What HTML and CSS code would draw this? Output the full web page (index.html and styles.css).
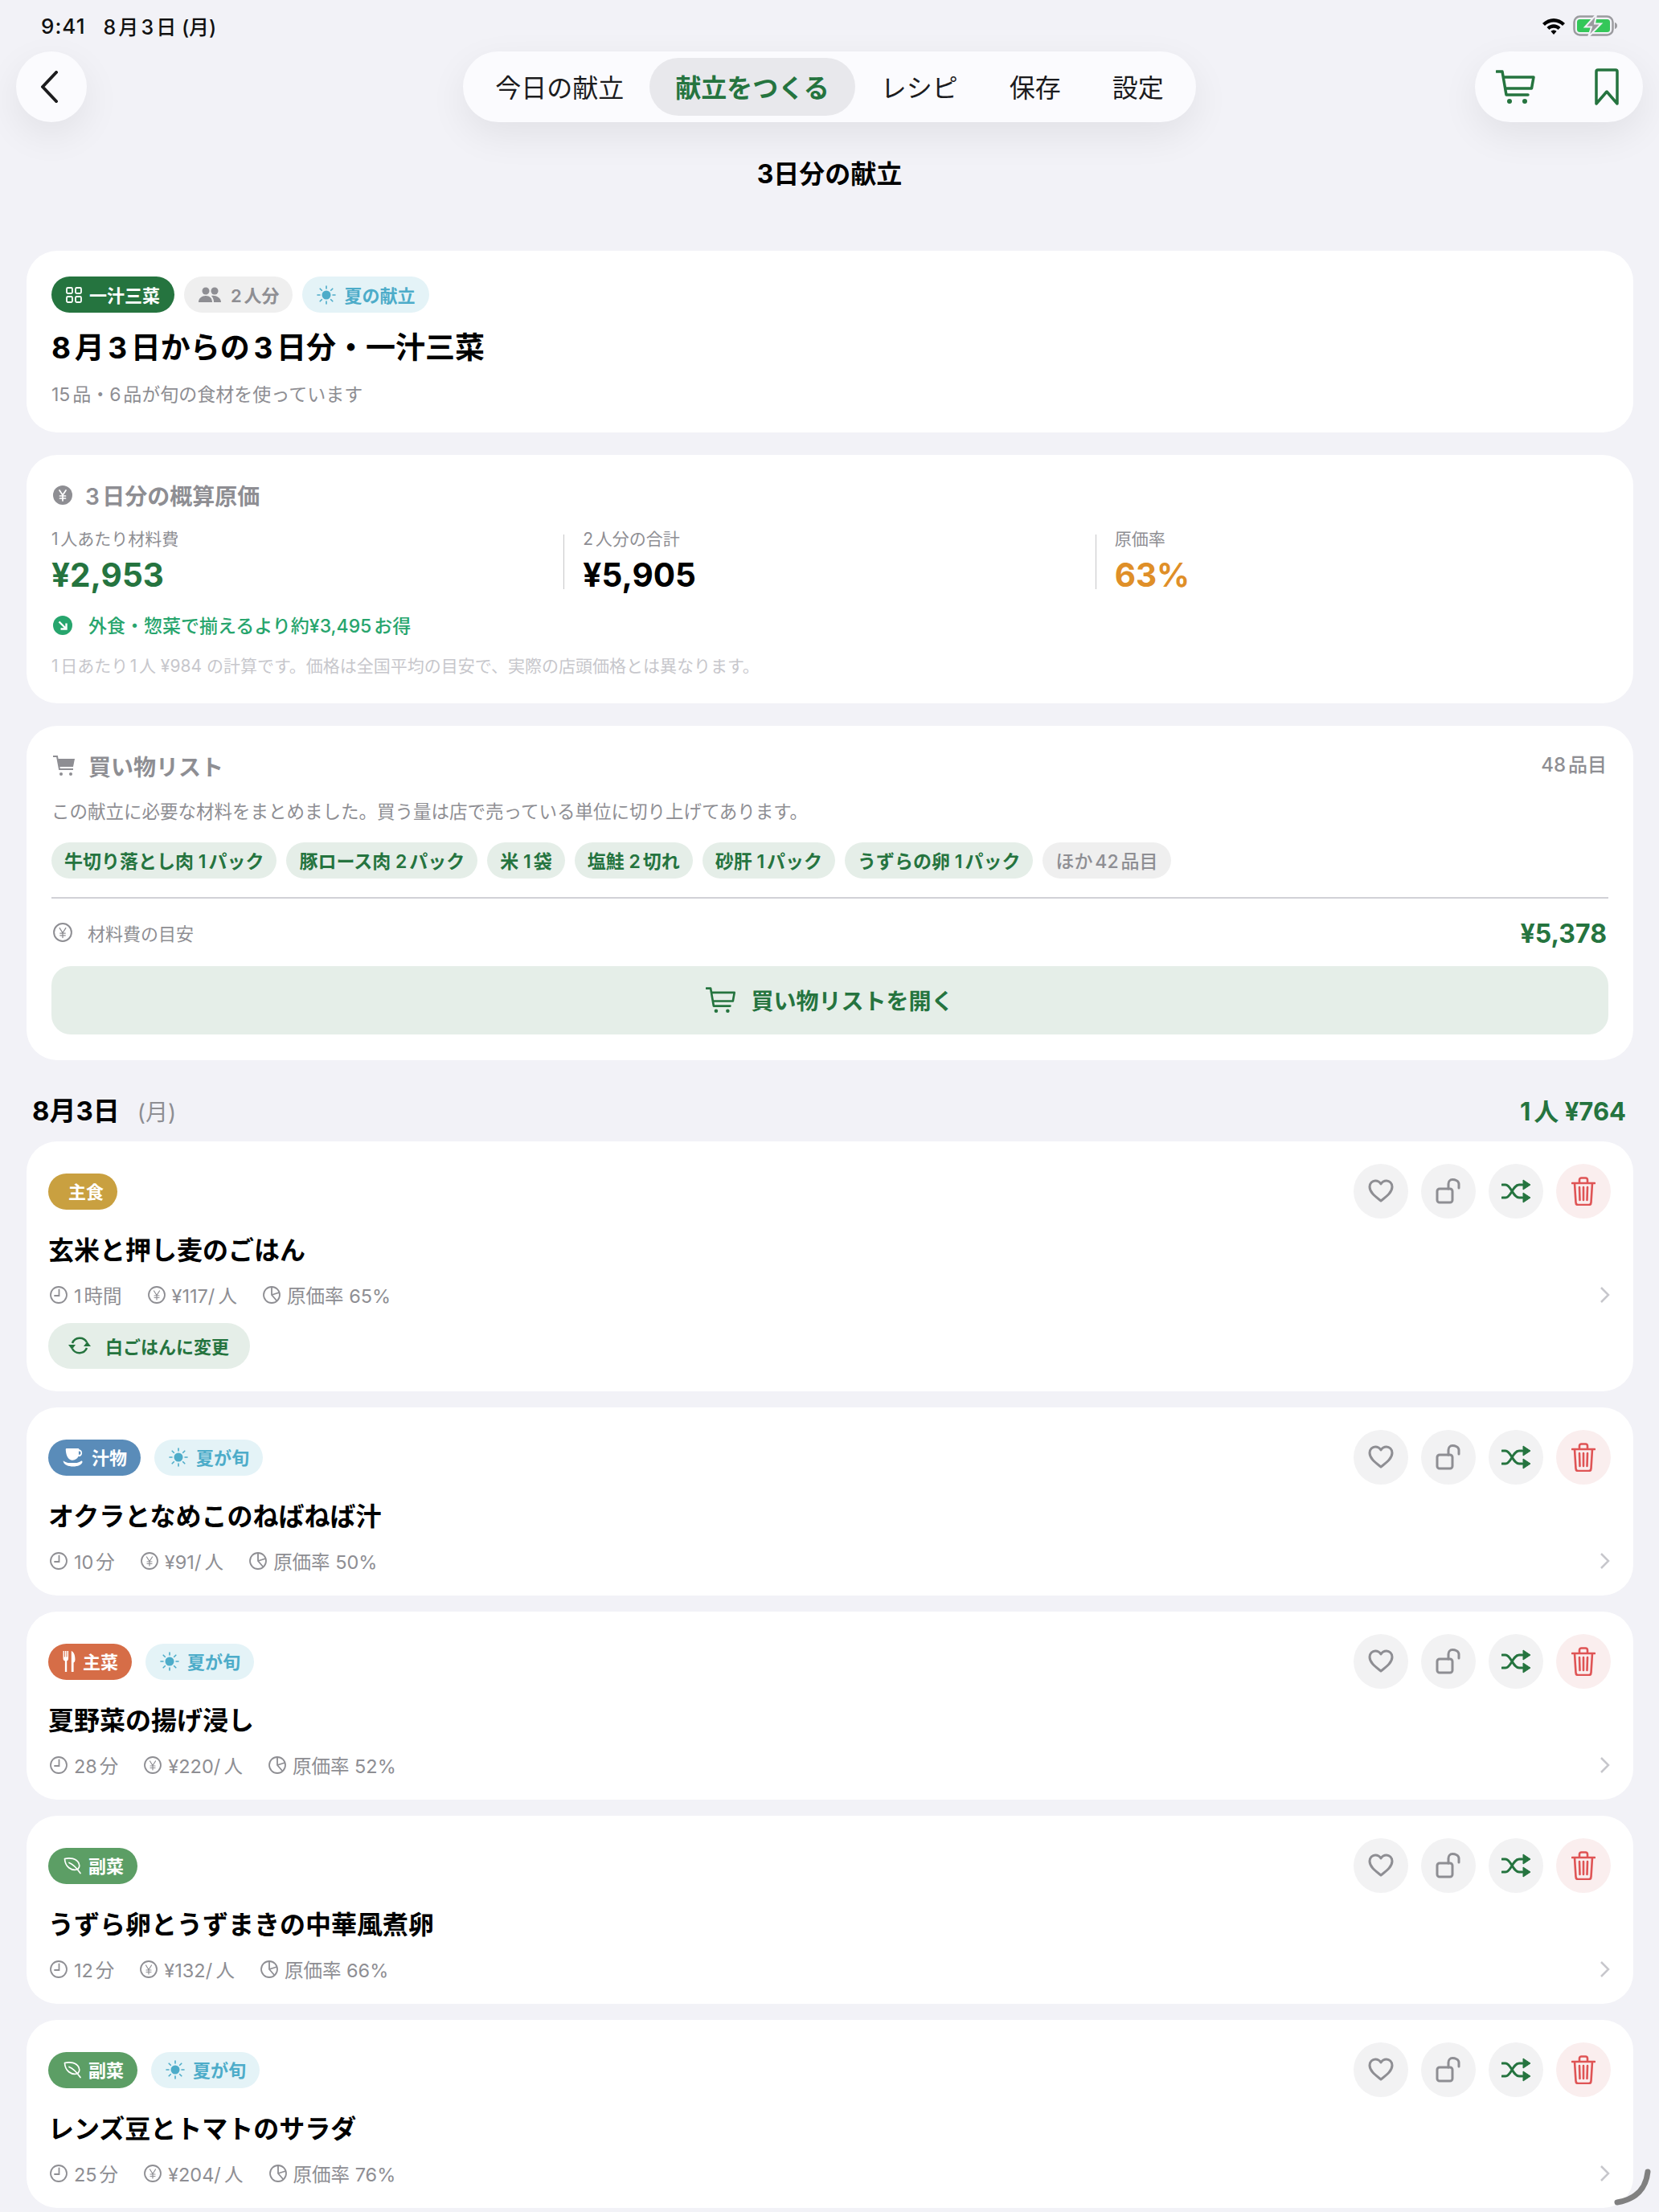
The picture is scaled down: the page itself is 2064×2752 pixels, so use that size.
FILE: index.html
```html
<!DOCTYPE html>
<html lang="ja">
<head>
    <meta charset="UTF-8">
    <title>3日分の献立</title>
    <link rel="stylesheet" href="styles.css">
</head>
<body>
    <svg class="sprite" width="0" height="0">
        <symbol id="i-cart" viewBox="0 0 50 44">
            <path d="M1 3h7l5 29h27M10 10h37l-2.500 14H12.500" fill="none" stroke="currentColor" stroke-width="3.500" stroke-linecap="round" stroke-linejoin="round"/>
            <circle cx="17" cy="40" r="3" fill="currentColor"/><circle cx="36" cy="40" r="3" fill="currentColor"/>
        </symbol>
        <symbol id="i-clock" viewBox="0 0 22 22">
            <circle cx="11" cy="11" r="10" fill="none" stroke="currentColor" stroke-width="1.800"/>
            <path d="M11.500 4.500V12H6" fill="none" stroke="currentColor" stroke-width="1.800" stroke-linecap="round"/>
        </symbol>
        <symbol id="i-yen" viewBox="0 0 22 22">
            <circle cx="11" cy="11" r="10" fill="none" stroke="currentColor" stroke-width="1.800"/>
            <path d="M7.500 6l3.500 5.500L14.500 6M11 11.500V17M8 12h6M8 14.500h6" fill="none" stroke="currentColor" stroke-width="1.200" stroke-linecap="round"/>
        </symbol>
        <symbol id="i-ratio" viewBox="0 0 22 22">
            <circle cx="11" cy="11" r="10" fill="none" stroke="currentColor" stroke-width="1.800"/>
            <path d="M11 1v10l6.500 7.500M11 11l9.500-3" fill="none" stroke="currentColor" stroke-width="1.800"/>
        </symbol>
        <symbol id="i-sun" viewBox="0 0 24 24">
            <circle cx="12" cy="12" r="5.500" fill="currentColor"/>
            <path d="M12 1v3M12 20v3M1 12h3M20 12h3M4.200 4.200l2.100 2.100M17.700 17.700l2.100 2.100M4.200 19.800l2.100-2.100M17.700 6.300l2.100-2.100" stroke="currentColor" stroke-width="1.600" stroke-linecap="round"/>
        </symbol>
        <symbol id="i-leaf" viewBox="0 0 24 24">
            <path d="M2.500 3.500C9 2 17 3 20 9c1.500 3.500.500 7-2.500 8C11 18.500 3 14 2.500 3.500zM8 8.500c4 1.500 9 6 14 13" fill="none" stroke="currentColor" stroke-width="1.700" stroke-linecap="round" stroke-linejoin="round"/>
        </symbol>
        <symbol id="i-cup" viewBox="0 0 28 26">
            <path d="M5 1h15c1.500 0 2 .500 2 1.500a5 5 0 0 1 1 9.500h-2c-1.500 3-4 5-8 5-5 0-8.500-5-9-14C4 2 4 1 5 1zM21.500 5v4.500h1a2.300 2.300 0 0 0 0-4.500z" fill="currentColor" fill-rule="evenodd"/>
            <path d="M1 18c2.500 1.500 3.500 2 6 2.500h12c2.500-.500 3.500-1 6-2.500 1 0 1.500.500 1.500 1.500-1 3.500-6 6-12.500 6S2 23 1 19.500C.500 18.500.500 18 1 18z" fill="currentColor"/>
        </symbol>
        <symbol id="i-fork" viewBox="0 0 16 30">
            <path d="M0 1h1.500v8h1V1h1.800v8h1V1H7v10c0 2-1 3-2 3.500V29H2.500V14.500C1 14 0 13 0 11zM11 1c3 1 5 5 5 11 0 3-.800 4-2 4.500V29h-3z" fill="currentColor"/>
        </symbol>
        <symbol id="i-heart" viewBox="0 0 32 30">
            <path d="M16 27C9 21.500 2 16.500 2 9.500 2 5 5.500 2 9 2c3 0 5.500 1.500 7 4 1.500-2.500 4-4 7-4 3.500 0 7 3 7 7.500 0 7-7 12-14 17.500z" fill="none" stroke="currentColor" stroke-width="3" stroke-linejoin="round"/>
        </symbol>
        <symbol id="i-unlock" viewBox="0 0 32 32">
            <rect x="2" y="13" width="19" height="17" rx="3" fill="none" stroke="currentColor" stroke-width="3"/>
            <path d="M17 13V7c0-3 2-5.500 5-5.500s8 1.500 8 5.500v5" transform="translate(-1 0)" fill="none" stroke="currentColor" stroke-width="3" stroke-linecap="round"/>
        </symbol>
        <symbol id="i-shuffle" viewBox="0 0 36 30">
            <path d="M1 7h4c7 0 9 16 17 16h4M1 23h4c7 0 9-16 17-16h4" fill="none" stroke="currentColor" stroke-width="3" stroke-linecap="round"/>
            <path d="M27 1l9 6-9 6zM27 17l9 6-9 6z" fill="currentColor" stroke="currentColor" stroke-linejoin="round"/>
        </symbol>
        <symbol id="i-trash" viewBox="0 0 30 36">
            <path d="M1 8h28M10 8V4c0-1.500 1-2.500 2.500-2.500h5C19 1.500 20 2.500 20 4v4M4 8l1.500 24c0 2 1 3 3 3h13c2 0 3-1 3-3L26 8M10 13l.500 16M15 13v16M20 13l-.500 16" fill="none" stroke="currentColor" stroke-width="2.600" stroke-linecap="round" stroke-linejoin="round"/>
        </symbol>
    </svg>

    <div class="status-bar">
        <div class="status-left">
            <span class="status-time">9:41</span>
            <span>8月3日 (月)</span>
        </div>
        <div class="status-right">
            <svg width="30" height="22" viewBox="0 0 30 22">
                <path d="M1 8c8-8 20-8 28 0l-3 3c-6-6-16-6-22 0zM6.500 13c5-5 12-5 17 0l-3 3c-3-3-8-3-11 0zM11.500 18c2-2 5-2 7 0L15 22z" fill="#000"/>
            </svg>
            <svg width="56" height="28" viewBox="0 0 56 28">
                <rect x="1.500" y="2.500" width="48" height="23" rx="7" fill="none" stroke="#9b9b9f" stroke-width="2.500"/>
                <path d="M52 10c2 .5 3 2 3 4s-1 3.500-3 4z" fill="#9b9b9f"/>
                <rect x="5" y="6" width="41" height="16" rx="3.500" fill="#34c759"/>
                <path d="M29 0L15 15.500h8L19 28 35 11.500h-8z" fill="#9a9a9e" stroke="#f2f2f7" stroke-width="2"/>
            </svg>
        </div>
    </div>

    <header class="nav">
        <button class="back-btn">
            <svg width="24" height="40" viewBox="0 0 24 40"><path d="M20 2L3 20l17 18" fill="none" stroke="#1c1c1e" stroke-width="4" stroke-linecap="round" stroke-linejoin="round"/></svg>
        </button>
        <nav class="tabs">
            <div class="tab">今日の献立</div>
            <div class="tab active">献立をつくる</div>
            <div class="tab">レシピ</div>
            <div class="tab">保存</div>
            <div class="tab">設定</div>
        </nav>
        <div class="nav-actions">
            <svg class="green" width="50" height="44"><use href="#i-cart"/></svg>
            <svg class="green" width="30" height="46" viewBox="0 0 30 46"><path d="M2 44V4c0-1.500 1-2 2-2h22c1 0 2 .5 2 2v40L15 29z" fill="none" stroke="currentColor" stroke-width="3.500" stroke-linejoin="round"/></svg>
        </div>
    </header>

    <h1 class="page-title">3日分の献立</h1>

    <main>
        <div class="summary-list">
            <section class="card">
                <div class="chips">
                    <span class="chip chip-green">
                        <svg width="20" height="22" viewBox="0 0 20 22"><g fill="none" stroke="currentColor" stroke-width="1.800"><rect x="1" y="2" width="7" height="7" rx="1.500"/><rect x="12" y="2" width="7" height="7" rx="1.500"/><rect x="1" y="13" width="7" height="7" rx="1.500"/><rect x="12" y="13" width="7" height="7" rx="1.500"/></g></svg>
                        一汁三菜
                    </span>
                    <span class="chip chip-gray">
                        <svg width="28" height="22" viewBox="0 0 28 22"><g fill="currentColor"><circle cx="9" cy="6" r="4.500"/><circle cx="20" cy="6" r="4.500"/><path d="M0 20c0-5 4-8 9-8s8 3 8 8zM19 20c0-3-1-6-3-8 5-1 12 2 12 8z"/></g></svg>
                        2人分
                    </span>
                    <span class="chip chip-season"><svg width="24" height="24"><use href="#i-sun"/></svg>夏の献立</span>
                </div>
                <h2 class="plan-title">8月3日からの3日分・一汁三菜</h2>
                <p class="plan-sub">15品・6品が旬の食材を使っています</p>
            </section>

            <section class="card">
                <h3 class="card-head">
                    <svg width="24" height="24" viewBox="0 0 24 24"><circle cx="12" cy="12" r="12" fill="#8e8e93"/><path d="M8 6l4 6 4-6M12 12v7M8.500 13h7M8.500 16h7" fill="none" stroke="#fff" stroke-width="1.700" stroke-linecap="round"/></svg>
                    3日分の概算原価
                </h3>
                <div class="stats">
                    <div class="stat">
                        <div class="stat-label">1人あたり材料費</div>
                        <div class="stat-value green">¥2,953</div>
                    </div>
                    <div class="stat-line"></div>
                    <div class="stat">
                        <div class="stat-label">2人分の合計</div>
                        <div class="stat-value">¥5,905</div>
                    </div>
                    <div class="stat-line"></div>
                    <div class="stat">
                        <div class="stat-label">原価率</div>
                        <div class="stat-value orange">63%</div>
                    </div>
                </div>
                <div class="saving">
                    <svg width="24" height="24" viewBox="0 0 24 24"><circle cx="12" cy="12" r="12" fill="#27a56d"/><path d="M7.500 7.500l8.500 8.500M16.500 9.500v7h-7" fill="none" stroke="#fff" stroke-width="2.400"/></svg>
                    外食・惣菜で揃えるより約¥3,495お得
                </div>
                <p class="note">1日あたり1人 ¥984 の計算です。価格は全国平均の目安で、実際の店頭価格とは異なります。</p>
            </section>

            <section class="card shop-card">
                <div class="shop-head">
                    <h3 class="card-head">
                        <svg width="28" height="26" viewBox="0 0 28 26"><path d="M0 1h5l3 16h17" fill="none" stroke="#8e8e93" stroke-width="2"/><path d="M6 4h21l-2 10H8z" fill="#8e8e93"/><circle cx="10" cy="23" r="2" fill="#8e8e93"/><circle cx="22" cy="23" r="2" fill="#8e8e93"/></svg>
                        買い物リスト
                    </h3>
                    <span class="shop-count">48品目</span>
                </div>
                <p class="shop-desc">この献立に必要な材料をまとめました。買う量は店で売っている単位に切り上げてあります。</p>
                <div class="chips tags">
                    <span class="tag">牛切り落とし肉 1パック</span>
                    <span class="tag">豚ロース肉 2パック</span>
                    <span class="tag">米 1袋</span>
                    <span class="tag">塩鮭 2切れ</span>
                    <span class="tag">砂肝 1パック</span>
                    <span class="tag">うずらの卵 1パック</span>
                    <span class="tag tag-more">ほか42品目</span>
                </div>
                <div class="cost-row">
                    <span class="cost-label"><svg class="gray" width="24" height="24"><use href="#i-yen"/></svg>材料費の目安</span>
                    <span class="cost-price">¥5,378</span>
                </div>
                <button class="shop-btn"><svg width="38" height="34"><use href="#i-cart"/></svg>買い物リストを開く</button>
            </section>
        </div>

        <div class="day-head">
            <div class="day-date">8月3日<span>(月)</span></div>
            <div class="day-cost">1人 ¥764</div>
        </div>

        <div class="menu-list">
            <article class="card dish">
                <div class="dish-top">
                    <div class="chips">
                        <span class="chip chip-rice">主食</span>
                    </div>
                    <div class="actions">
                        <span class="action"><svg class="gray" width="32" height="30"><use href="#i-heart"/></svg></span>
                        <span class="action"><svg class="gray" width="32" height="32"><use href="#i-unlock"/></svg></span>
                        <span class="action"><svg class="green" width="36" height="30"><use href="#i-shuffle"/></svg></span>
                        <span class="action action-del"><svg width="30" height="36"><use href="#i-trash"/></svg></span>
                    </div>
                </div>
                <h3 class="dish-name">玄米と押し麦のごはん</h3>
                <div class="meta">
                    <span><svg width="22" height="22"><use href="#i-clock"/></svg>1時間</span>
                    <span><svg width="22" height="22"><use href="#i-yen"/></svg>¥117/&thinsp;人</span>
                    <span><svg width="22" height="22"><use href="#i-ratio"/></svg>原価率 65%</span>
                    <svg class="chevron" width="14" height="22" viewBox="0 0 14 22"><path d="M2 2l9 9-9 9" fill="none" stroke="currentColor" stroke-width="2.500"/></svg>
                </div>
                <button class="swap-btn">
                    <svg width="28" height="26" viewBox="0 0 28 26"><path d="M5 10A10 10 0 0 1 23 9M23 16A10 10 0 0 1 5 17" fill="none" stroke="currentColor" stroke-width="2.500"/><path d="M0 12h9l-4.500 6zM19 14h9l-4.500-6z" fill="currentColor"/></svg>
                    白ごはんに変更
                </button>
            </article>

            <article class="card dish">
                <div class="dish-top">
                    <div class="chips">
                        <span class="chip chip-soup"><svg width="26" height="24"><use href="#i-cup"/></svg>汁物</span>
                        <span class="chip chip-season"><svg width="24" height="24"><use href="#i-sun"/></svg>夏が旬</span>
                    </div>
                    <div class="actions">
                        <span class="action"><svg class="gray" width="32" height="30"><use href="#i-heart"/></svg></span>
                        <span class="action"><svg class="gray" width="32" height="32"><use href="#i-unlock"/></svg></span>
                        <span class="action"><svg class="green" width="36" height="30"><use href="#i-shuffle"/></svg></span>
                        <span class="action action-del"><svg width="30" height="36"><use href="#i-trash"/></svg></span>
                    </div>
                </div>
                <h3 class="dish-name">オクラとなめこのねばねば汁</h3>
                <div class="meta">
                    <span><svg width="22" height="22"><use href="#i-clock"/></svg>10分</span>
                    <span><svg width="22" height="22"><use href="#i-yen"/></svg>¥91/&thinsp;人</span>
                    <span><svg width="22" height="22"><use href="#i-ratio"/></svg>原価率 50%</span>
                    <svg class="chevron" width="14" height="22" viewBox="0 0 14 22"><path d="M2 2l9 9-9 9" fill="none" stroke="currentColor" stroke-width="2.500"/></svg>
                </div>
            </article>

            <article class="card dish">
                <div class="dish-top">
                    <div class="chips">
                        <span class="chip chip-main"><svg width="16" height="28"><use href="#i-fork"/></svg>主菜</span>
                        <span class="chip chip-season"><svg width="24" height="24"><use href="#i-sun"/></svg>夏が旬</span>
                    </div>
                    <div class="actions">
                        <span class="action"><svg class="gray" width="32" height="30"><use href="#i-heart"/></svg></span>
                        <span class="action"><svg class="gray" width="32" height="32"><use href="#i-unlock"/></svg></span>
                        <span class="action"><svg class="green" width="36" height="30"><use href="#i-shuffle"/></svg></span>
                        <span class="action action-del"><svg width="30" height="36"><use href="#i-trash"/></svg></span>
                    </div>
                </div>
                <h3 class="dish-name">夏野菜の揚げ浸し</h3>
                <div class="meta">
                    <span><svg width="22" height="22"><use href="#i-clock"/></svg>28分</span>
                    <span><svg width="22" height="22"><use href="#i-yen"/></svg>¥220/&thinsp;人</span>
                    <span><svg width="22" height="22"><use href="#i-ratio"/></svg>原価率 52%</span>
                    <svg class="chevron" width="14" height="22" viewBox="0 0 14 22"><path d="M2 2l9 9-9 9" fill="none" stroke="currentColor" stroke-width="2.500"/></svg>
                </div>
            </article>

            <article class="card dish">
                <div class="dish-top">
                    <div class="chips">
                        <span class="chip chip-side"><svg width="24" height="24"><use href="#i-leaf"/></svg>副菜</span>
                    </div>
                    <div class="actions">
                        <span class="action"><svg class="gray" width="32" height="30"><use href="#i-heart"/></svg></span>
                        <span class="action"><svg class="gray" width="32" height="32"><use href="#i-unlock"/></svg></span>
                        <span class="action"><svg class="green" width="36" height="30"><use href="#i-shuffle"/></svg></span>
                        <span class="action action-del"><svg width="30" height="36"><use href="#i-trash"/></svg></span>
                    </div>
                </div>
                <h3 class="dish-name">うずら卵とうずまきの中華風煮卵</h3>
                <div class="meta">
                    <span><svg width="22" height="22"><use href="#i-clock"/></svg>12分</span>
                    <span><svg width="22" height="22"><use href="#i-yen"/></svg>¥132/&thinsp;人</span>
                    <span><svg width="22" height="22"><use href="#i-ratio"/></svg>原価率 66%</span>
                    <svg class="chevron" width="14" height="22" viewBox="0 0 14 22"><path d="M2 2l9 9-9 9" fill="none" stroke="currentColor" stroke-width="2.500"/></svg>
                </div>
            </article>

            <article class="card dish">
                <div class="dish-top">
                    <div class="chips">
                        <span class="chip chip-side"><svg width="24" height="24"><use href="#i-leaf"/></svg>副菜</span>
                        <span class="chip chip-season"><svg width="24" height="24"><use href="#i-sun"/></svg>夏が旬</span>
                    </div>
                    <div class="actions">
                        <span class="action"><svg class="gray" width="32" height="30"><use href="#i-heart"/></svg></span>
                        <span class="action"><svg class="gray" width="32" height="32"><use href="#i-unlock"/></svg></span>
                        <span class="action"><svg class="green" width="36" height="30"><use href="#i-shuffle"/></svg></span>
                        <span class="action action-del"><svg width="30" height="36"><use href="#i-trash"/></svg></span>
                    </div>
                </div>
                <h3 class="dish-name">レンズ豆とトマトのサラダ</h3>
                <div class="meta">
                    <span><svg width="22" height="22"><use href="#i-clock"/></svg>25分</span>
                    <span><svg width="22" height="22"><use href="#i-yen"/></svg>¥204/&thinsp;人</span>
                    <span><svg width="22" height="22"><use href="#i-ratio"/></svg>原価率 76%</span>
                    <svg class="chevron" width="14" height="22" viewBox="0 0 14 22"><path d="M2 2l9 9-9 9" fill="none" stroke="currentColor" stroke-width="2.500"/></svg>
                </div>
            </article>
        </div>
    </main>

    <svg class="scroll-corner" width="50" height="50" viewBox="0 0 50 50"><path d="M44 4C42 24 30 38 6 42" fill="none" stroke="#808080" stroke-width="7" stroke-linecap="round"/></svg>
</body>
</html>
```

FILE: styles.css
```css
* {
    box-sizing: border-box;
}

html, body {
    height: 2752px;
}

body {
    margin: 0;
    position: relative;
    overflow: hidden;
    background: #f2f2f7;
    color: #000;
    font-family: Inter, "Noto Sans CJK JP", sans-serif;
    text-autospace: normal;
}

h1, h2, h3, p {
    margin: 0;
}

button {
    border: none;
    font-family: inherit;
}

svg {
    display: block;
    flex-shrink: 0;
}

.sprite {
    position: absolute;
}

.green {
    color: #25743f;
}

.gray {
    color: #8e8e93;
}

.orange {
    color: #df8f28;
}

/* status bar */
.status-bar {
    height: 64px;
    padding: 0 51px;
    display: flex;
    align-items: center;
    justify-content: space-between;
    font-size: 25px;
    font-weight: 500;
    color: #111;
}

.status-left {
    display: flex;
    align-items: center;
    gap: 22px;
}

.status-time {
    font-size: 26px;
    letter-spacing: 1px;
}

.status-right {
    display: flex;
    align-items: center;
    gap: 9px;
}

/* nav */
.nav {
    display: grid;
    grid-template-columns: 1fr auto 1fr;
    align-items: center;
    padding: 0 20px;
    height: 88px;
}

.back-btn {
    width: 88px;
    height: 88px;
    border-radius: 50%;
    background: #fbfbfe;
    display: flex;
    align-items: center;
    justify-content: center;
    padding: 0 4px 0 0;
    box-shadow: 0 16px 48px rgba(0, 0, 0, 0.07);
}

.tabs {
    display: flex;
    padding: 8px;
    height: 88px;
    border-radius: 44px;
    background: #fbfbfe;
    box-shadow: 0 16px 48px rgba(0, 0, 0, 0.07);
}

.tab {
    padding: 0 32px 2px;
    display: flex;
    align-items: center;
    font-size: 32px;
    color: #1c1c1e;
    border-radius: 36px;
}

.tab.active {
    background: #e8e8ec;
    color: #25743f;
    font-weight: 600;
}

.nav-actions {
    justify-self: end;
    width: 209px;
    height: 88px;
    padding: 0 30px 0 26px;
    display: flex;
    align-items: center;
    justify-content: space-between;
    border-radius: 44px;
    background: #fbfbfe;
    box-shadow: 0 16px 48px rgba(0, 0, 0, 0.07);
}

.page-title {
    margin-top: 45px;
    height: 40px;
    line-height: 40px;
    text-align: center;
    font-size: 32px;
    font-weight: 700;
    text-autospace: no-autospace;
}

/* cards */
main {
    margin-top: 75px;
    padding: 0 32px 0 33px;
}

.summary-list {
    display: flex;
    flex-direction: column;
    gap: 28px;
}

.card {
    background: #fff;
    border-radius: 38px;
    padding: 32px 31px 31px;
}

.chips {
    display: flex;
    gap: 12px;
}

.chip {
    height: 45px;
    padding: 0 17px 2px 18px;
    display: flex;
    align-items: center;
    gap: 10px;
    border-radius: 23px;
    font-size: 22px;
    font-weight: 600;
    white-space: nowrap;
}

.chip svg {
    margin-bottom: -2px;
}

.chip-green {
    background: #25743f;
    color: #fff;
    gap: 9px;
    padding-right: 18px;
}

.chip-gray {
    background: #efefef;
    color: #8e8e93;
    gap: 12px;
}

.chip-season {
    background: #e4f3f7;
    color: #4dacc9;
}

.chip-rice {
    background: #c9a040;
    color: #fff;
    padding-left: 25px;
}

.chip-soup {
    background: #5a8cb9;
    color: #fff;
}

.chip-main {
    background: #d66d47;
    color: #fff;
    gap: 9px;
}

.chip-side {
    background: #5c9e65;
    color: #fff;
    gap: 8px;
}

.plan-title {
    margin-top: 20px;
    font-size: 37px;
    line-height: 48px;
    font-weight: 700;
}

.plan-sub {
    margin-top: 18px;
    font-size: 23px;
    line-height: 32px;
    color: #8e8e93;
}

.card-head {
    height: 36px;
    display: flex;
    align-items: center;
    gap: 16px;
    padding-left: 2px;
    font-size: 28px;
    font-weight: 600;
    color: #8e8e93;
}

/* cost summary */
.stats {
    margin-top: 23px;
    display: flex;
    gap: 23px;
}

.stat {
    flex: 1;
}

.stat-line {
    width: 1px;
    height: 68px;
    margin-top: 8px;
    background: #c6c6c8;
}

.stat-label {
    font-size: 21px;
    line-height: 28px;
    color: #8e8e93;
}

.stat-value {
    margin-top: 6px;
    margin-bottom: 1px;
    font-size: 40.500px;
    line-height: 50px;
    font-weight: 700;
}

.stat-value.green {
    color: #25743f;
}

.saving {
    margin-top: 20px;
    height: 32px;
    padding: 0 0 2px 2px;
    display: flex;
    align-items: center;
    gap: 20px;
    font-size: 23px;
    font-weight: 500;
    color: #27a56d;
}

.saving svg {
    margin-bottom: -2px;
}

.note {
    margin-top: 20px;
    font-size: 21px;
    line-height: 30px;
    color: #c7c7cc;
}

/* shopping list */
.shop-card {
    padding-bottom: 32px;
}

.shop-head {
    display: flex;
    align-items: center;
    justify-content: space-between;
    height: 36px;
}

.shop-count {
    font-size: 24px;
    line-height: 30px;
    font-weight: 500;
    color: #8e8e93;
    padding: 0 2px 2px 0;
}

.shop-desc {
    margin-top: 24px;
    font-size: 22.500px;
    line-height: 30px;
    color: #8e8e93;
}

.tags {
    margin-top: 23px;
}

.tag {
    height: 45px;
    padding: 0 16px 2px;
    display: flex;
    align-items: center;
    border-radius: 23px;
    background: #e5eee8;
    color: #25743f;
    font-size: 23px;
    font-weight: 600;
    white-space: nowrap;
}

.tag-more {
    background: #efefef;
    color: #8e8e93;
    font-weight: 500;
}

.cost-row {
    margin-top: 23px;
    padding-top: 25px;
    border-top: 2px solid #d1d1d6;
    display: flex;
    align-items: center;
    justify-content: space-between;
    height: 63px;
}

.cost-label {
    display: flex;
    align-items: center;
    gap: 19px;
    padding: 0 0 2px 2px;
    font-size: 22px;
    color: #8e8e93;
}

.cost-price {
    font-size: 32px;
    font-weight: 700;
    color: #25743f;
    padding-right: 2px;
}

.shop-btn {
    margin-top: 23px;
    width: 100%;
    height: 85px;
    padding-bottom: 2px;
    display: flex;
    align-items: center;
    justify-content: center;
    gap: 18px;
    border-radius: 24px;
    background: #e5eee8;
    color: #25743f;
    font-size: 28px;
    font-weight: 600;
}

/* day */
.day-head {
    margin-top: 39px;
    margin-bottom: 18px;
    height: 44px;
    padding: 0 9px 0 7px;
    display: flex;
    align-items: center;
    justify-content: space-between;
}

.day-date {
    font-size: 33px;
    font-weight: 700;
    text-autospace: no-autospace;
}

.day-date span {
    margin-left: 22px;
    font-size: 28px;
    font-weight: 400;
    color: #8e8e93;
}

.day-cost {
    font-size: 31px;
    font-weight: 700;
    color: #25743f;
}

.menu-list {
    display: flex;
    flex-direction: column;
    gap: 20px;
}

.dish {
    padding: 28px 28px 28px 27px;
}

.dish-top {
    display: flex;
    align-items: center;
    justify-content: space-between;
}

.dish-top .chips {
    gap: 17px;
}

.actions {
    display: flex;
    gap: 16px;
}

.action {
    width: 68px;
    height: 68px;
    border-radius: 50%;
    background: #f2f2f3;
    display: flex;
    align-items: center;
    justify-content: center;
}

.action-del {
    background: #faeeee;
    color: #df5455;
}

.dish-name {
    margin-top: 20px;
    font-size: 32px;
    line-height: 40px;
    font-weight: 700;
}

.meta {
    margin-top: 22px;
    height: 28px;
    padding-bottom: 2px;
    display: flex;
    align-items: center;
    gap: 30px;
    font-size: 23.500px;
    color: #8e8e93;
}

.meta span {
    display: flex;
    align-items: center;
    gap: 8px;
    padding-left: 2px;
}

.chevron {
    margin-left: auto;
    color: #c7c7cc;
}

.swap-btn {
    margin-top: 20px;
    height: 57px;
    padding: 0 26px 2px 25px;
    display: flex;
    align-items: center;
    gap: 18px;
    border-radius: 29px;
    background: #e5eee8;
    color: #25743f;
    font-size: 22px;
    font-weight: 600;
}

.scroll-corner {
    position: absolute;
    right: 8px;
    bottom: 4px;
}
```
